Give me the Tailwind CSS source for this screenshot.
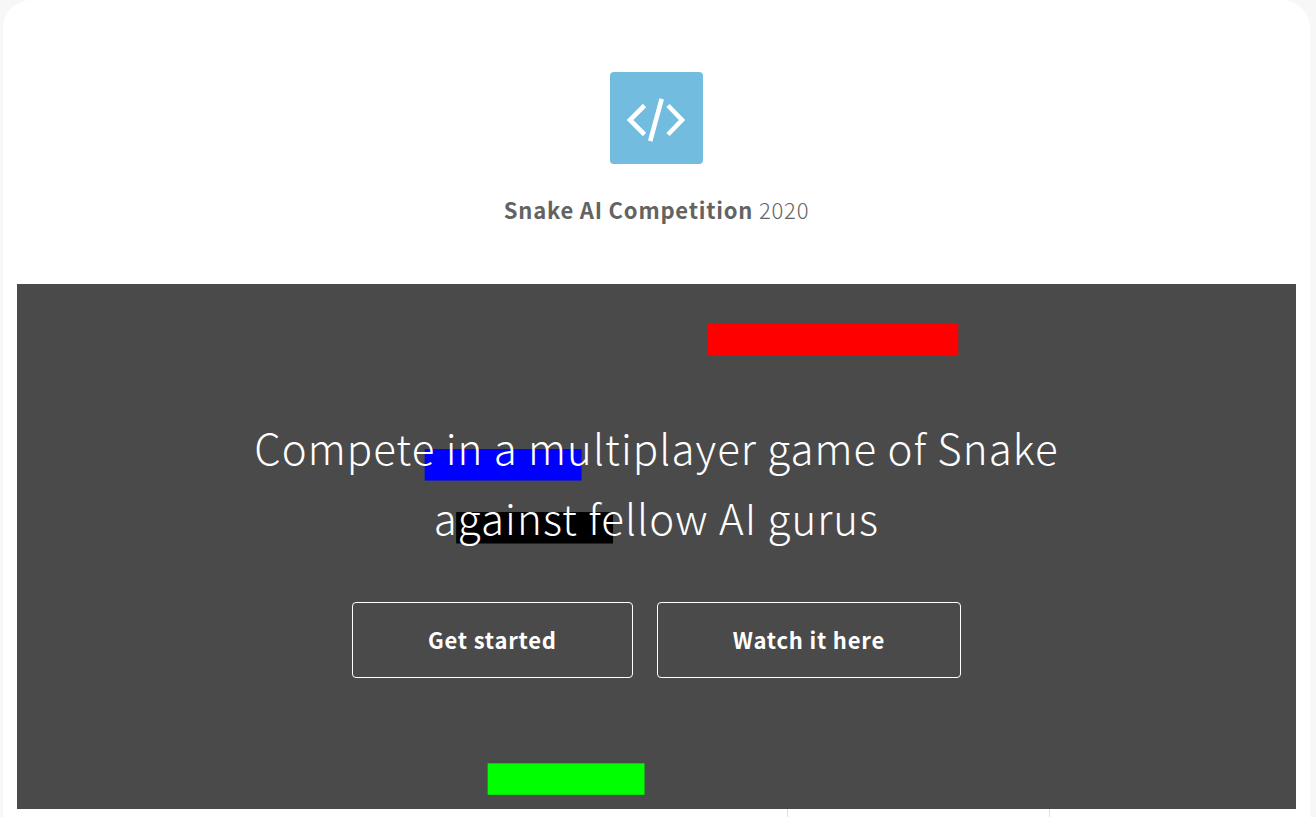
<!DOCTYPE html>
<html lang="en">
<head>
<meta charset="utf-8">
<meta name="viewport" content="width=device-width, initial-scale=1">
<title>Snake AI Competition 2020</title>
<script src="https://cdn.jsdelivr.net/npm/@tailwindcss/browser@4"></script>
</head>
<body class="min-h-screen overflow-x-hidden bg-[#f7f7f7] pl-[3px] pr-[6px] font-['Noto_Sans_CJK_SC','Noto_Sans',sans-serif] tracking-wider">
<div class="flex min-h-screen flex-col rounded-t-[28px] bg-white px-[14px]">
  <header class="flex flex-col items-center pt-[72px] pb-[54px]">
    <a href="#" aria-label="Home" class="flex h-[92px] w-[93px] items-center justify-center rounded bg-[#72bcdf]">
      <svg viewBox="0 0 93 92" class="h-full w-full" fill="none" stroke="#fff" stroke-width="4.6" stroke-linejoin="miter" aria-hidden="true">
        <path d="M34.500 33.500 20 48 34.500 62.500M58 33.500 72 48 58 62.500"/>
        <path d="M51.700 26.800 40.200 69.200"/>
      </svg>
    </a>
    <h1 class="mt-6 text-[22px] leading-[42px] font-light text-[#636363]"><strong class="font-bold">Snake AI Competition</strong> 2020</h1>
  </header>
  <main>
    <section class="relative h-[525px] bg-[#4a4a4a]">
      <svg viewBox="0 0 1280 525" class="absolute inset-0 h-full w-full" aria-hidden="true">
        <rect x="691" y="39.500" width="251" height="31.500" fill="#f00"/>
        <rect x="408" y="165" width="157" height="31.500" fill="#00f"/>
        <rect x="439.500" y="228" width="157" height="31.500" fill="#000"/>
        <rect x="471" y="479.500" width="157" height="31.500" fill="#0f0"/>
      </svg>
      <div class="relative flex flex-col items-center pt-32 text-white">
        <h2 class="max-w-[860px] text-center text-[42px] leading-[70px] font-light tracking-wide">Compete in a multiplayer game of Snake against fellow AI gurus</h2>
        <div class="mt-[50px] flex gap-6 text-[22px] font-bold">
          <a href="#start" class="flex h-[76px] items-center rounded border border-white px-[75px] pb-[2px]">Get started</a>
          <a href="#watch" class="flex h-[76px] items-center rounded border border-white px-[75px] pb-[2px]">Watch it here</a>
        </div>
      </div>
    </section>
  </main>
  <div class="flex flex-1" aria-hidden="true">
    <div class="w-[60.300%] border-r border-[#dedede]"></div>
    <div class="w-[20.500%] border-r border-[#dedede]"></div>
  </div>
</div>
</body>
</html>
